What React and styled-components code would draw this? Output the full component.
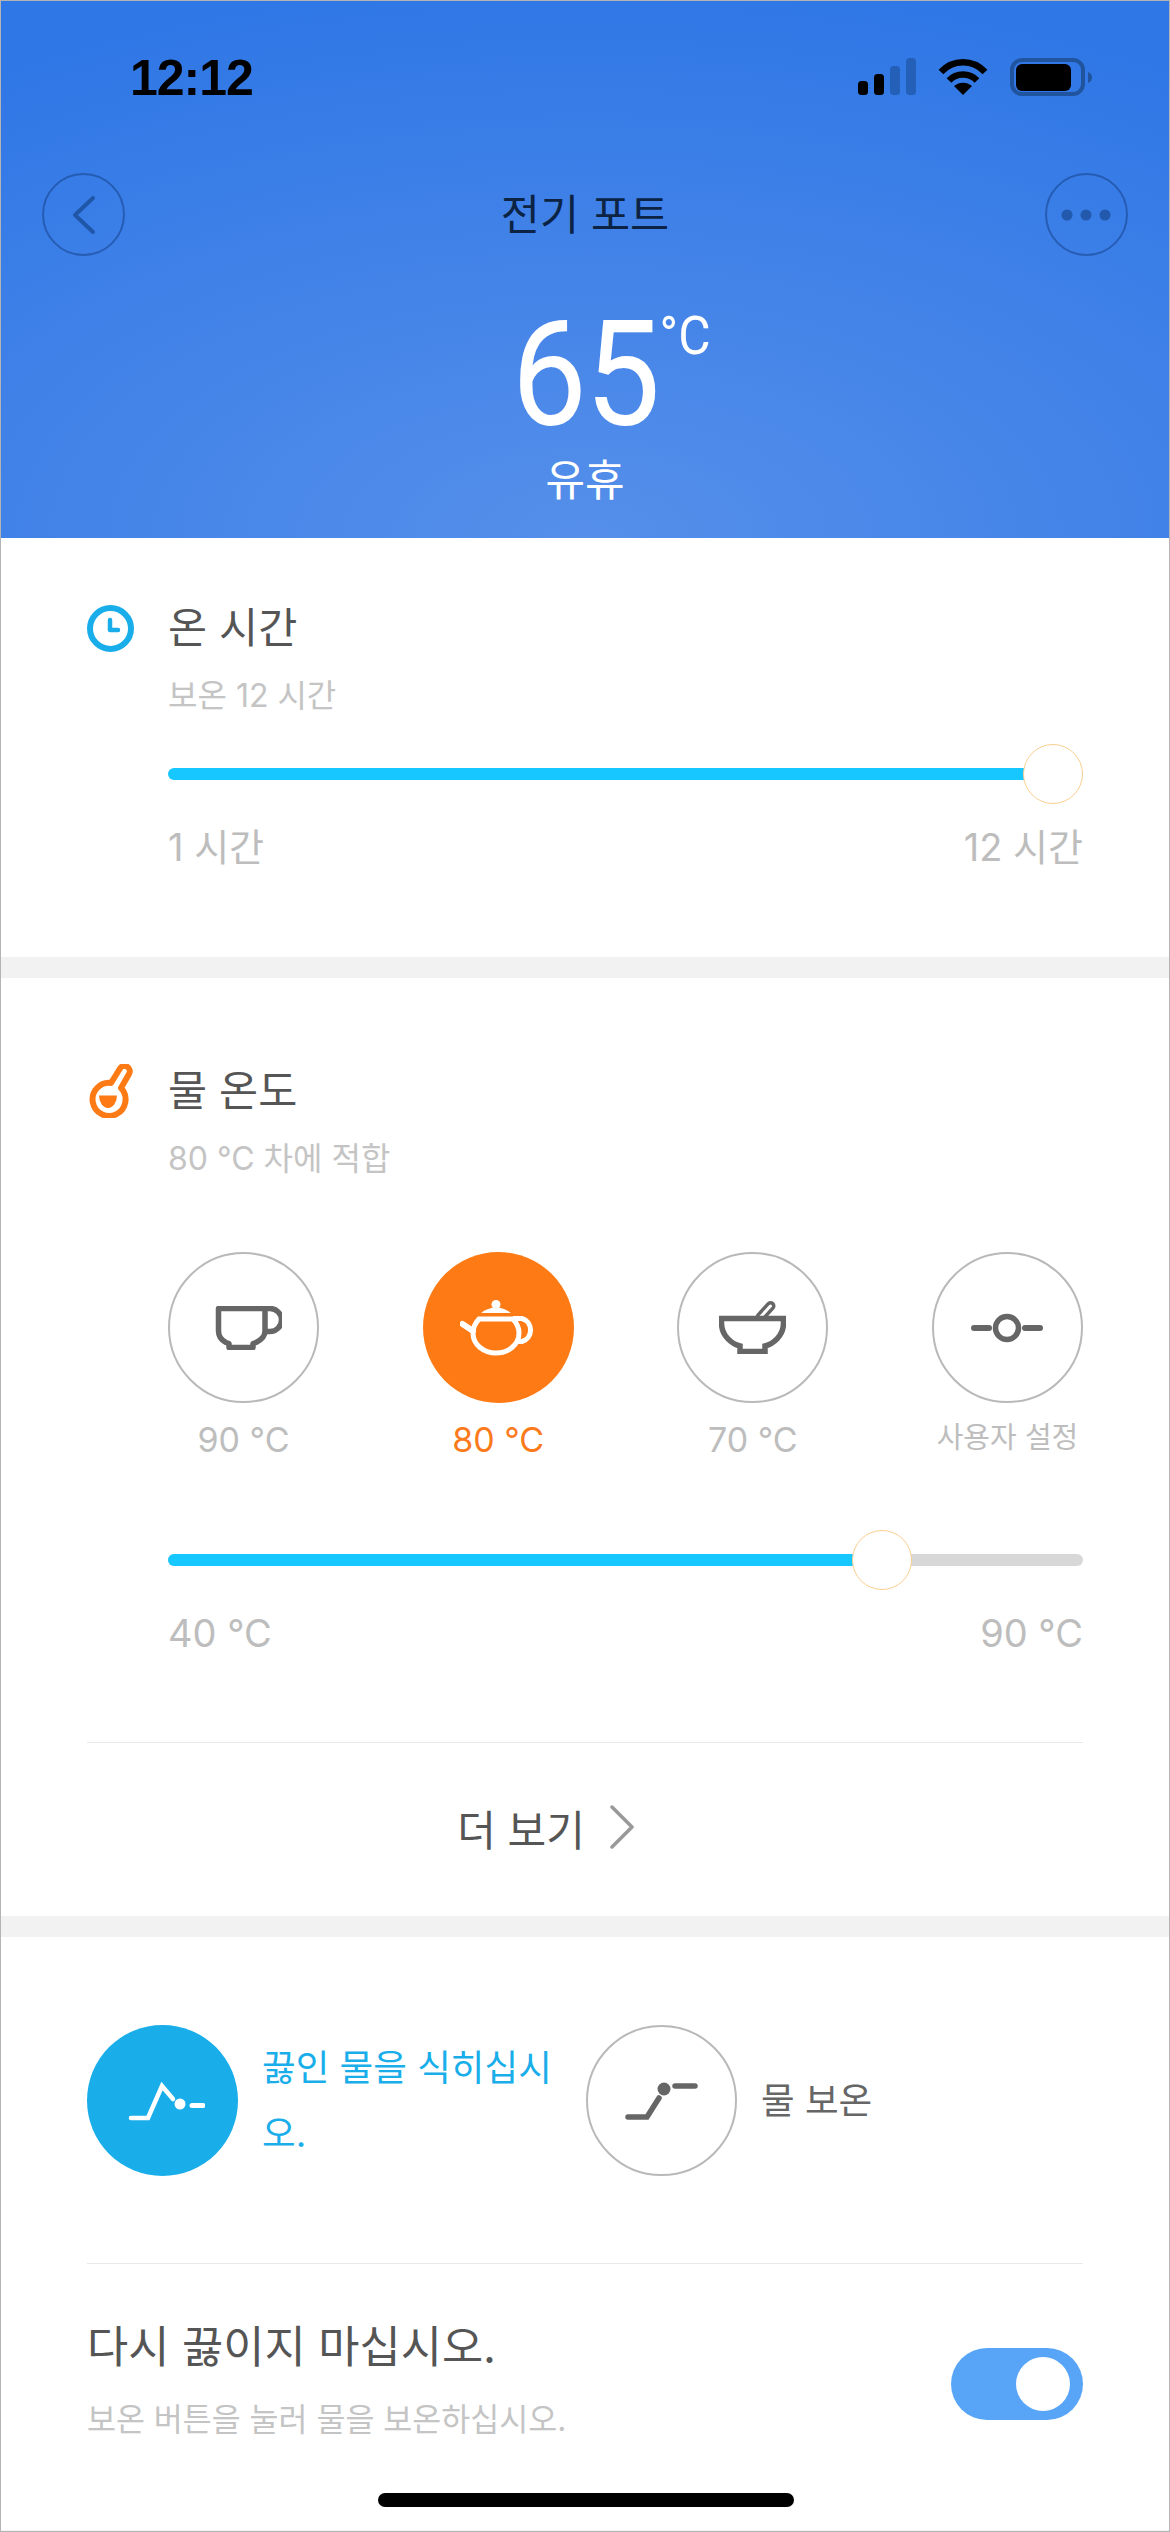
import React from "react";
import styled, { createGlobalStyle } from "styled-components";

const GlobalStyle = createGlobalStyle`
  html, body {
    margin: 0;
    padding: 0;
    background: #fff;
  }
  body {
    font-family: Inter, "Noto Sans CJK KR", sans-serif;
  }
`;

const Screen = styled.div`
  position: relative;
  box-sizing: border-box;
  width: 1170px;
  height: 2532px;
  border: 1px solid #b4b4b4;
  background: #f2f2f2;
  overflow: hidden;
`;

const Header = styled.header`
  height: 537px;
  box-sizing: border-box;
  padding: 57px 41px 0;
  display: flex;
  flex-direction: column;
  background: radial-gradient(ellipse 1100px 560px at 50% 100%, #558fea 0%, #4484e8 45%, #2f77e6 100%);
`;

const StatusBar = styled.div`
  display: flex;
  justify-content: space-between;
  align-items: flex-start;
  height: 115px;
  padding: 0 0 0 88px;
`;

const Time = styled.div`
  font-family: "Liberation Sans", sans-serif;
  font-weight: 700;
  font-size: 50px;
  line-height: 40px;
  letter-spacing: -1px;
  color: #000;
`;

const StatusIcons = styled.div`
  display: flex;
  gap: 22px;
  margin-right: 36px;
`;

const Nav = styled.div`
  display: flex;
  justify-content: space-between;
  align-items: center;
  height: 83px;
`;

const NavButton = styled.div`
  box-sizing: border-box;
  width: 83px;
  height: 83px;
  border-radius: 50%;
  border: 2px solid rgba(25, 70, 145, 0.6);
  display: flex;
  align-items: center;
  justify-content: center;
`;

const NavTitle = styled.div`
  font-size: 42.5px;
  line-height: 50px;
  color: #0c2344;
`;

const TempBlock = styled.div`
  display: flex;
  flex-direction: column;
  align-items: center;
  margin-top: 50px;
`;

const TempValue = styled.div`
  position: relative;
  font-family: Roboto, sans-serif;
  font-weight: 400;
  font-size: 146px;
  line-height: 140px;
  letter-spacing: -2px;
  color: #fff;
  transform: scaleX(0.92);
`;

const TempUnit = styled.span`
  position: absolute;
  left: 100%;
  top: 0;
  margin-left: 1px;
  font-size: 54px;
  line-height: 60px;
  letter-spacing: 0;
  font-weight: 400;
`;

const TempState = styled.div`
  font-size: 43px;
  line-height: 50px;
  color: #fff;
  margin-top: 9px;
`;

const Section = styled.section`
  background: #fff;
  box-sizing: border-box;
  padding: ${(p) => p.$pad};
  margin-top: ${(p) => (p.$first ? 0 : "21px")};
  height: ${(p) => p.$height}px;
`;

const TitleRow = styled.div`
  display: flex;
  align-items: center;
  gap: 34px;
  height: 50px;
`;

const Title = styled.div`
  font-size: 42.5px;
  line-height: 50px;
  color: #555;
`;

const SubTitle = styled.div`
  margin: 23px 0 0 81px;
  font-size: 32px;
  line-height: 40px;
  color: #c4c4c4;
`;

const Indented = styled.div`
  margin-left: 81px;
  margin-top: ${(p) => p.$top}px;
`;

const Slider = styled.div`
  position: relative;
  height: 60px;
  display: flex;
  align-items: center;
`;

const Track = styled.div`
  flex: 1;
  height: 12px;
  border-radius: 6px;
  background: #d8d8d8;
  overflow: hidden;
`;

const Fill = styled.div`
  height: 100%;
  width: ${(p) => p.$width}px;
  background: #17c7ff;
`;

const Knob = styled.div`
  position: absolute;
  top: 0;
  left: ${(p) => p.$left}px;
  box-sizing: border-box;
  width: 60px;
  height: 60px;
  border-radius: 50%;
  background: #fff;
  border: 1px solid #fbcf90;
`;

const RangeLabels = styled.div`
  display: flex;
  justify-content: space-between;
  margin-top: 21px;
  font-size: 38px;
  line-height: 44px;
  color: #bdbdbd;
`;

const Presets = styled.div`
  display: flex;
  justify-content: space-between;
  margin: 73px 0 0 81px;
`;

const Preset = styled.div`
  width: 151px;
  display: flex;
  flex-direction: column;
  align-items: center;
`;

const Round = styled.div`
  box-sizing: border-box;
  width: 151px;
  height: 151px;
  border-radius: 50%;
  display: flex;
  align-items: center;
  justify-content: center;
  flex-shrink: 0;
  border: ${(p) => (p.$fill ? "none" : "2px solid #b9b9b9")};
  background: ${(p) => p.$fill || "#fff"};
`;

const PresetLabel = styled.div`
  margin-top: 17px;
  white-space: nowrap;
  font-size: ${(p) => (p.$small ? "29px" : "34px")};
  line-height: ${(p) => (p.$small ? "36px" : "40px")};
  color: ${(p) => (p.$active ? "#fb7a1b" : "#bdbdbd")};
`;

const Divider = styled.div`
  height: 1px;
  background: #e9e9e9;
  margin-top: ${(p) => p.$top}px;
`;

const MoreRow = styled.div`
  height: 168px;
  padding-right: 78px;
  display: flex;
  align-items: center;
  justify-content: center;
  gap: 24px;
  font-size: 42px;
  color: #555;
`;

const Modes = styled.div`
  display: flex;
`;

const Mode = styled.div`
  display: flex;
  align-items: center;
  gap: 24px;
  width: ${(p) => (p.$wide ? "499px" : "auto")};
`;

const ModeLabel = styled.div`
  width: ${(p) => (p.$wide ? "300px" : "auto")};
  font-size: 36.6px;
  line-height: 66px;
  word-break: break-all;
  color: ${(p) => p.$color};
`;

const ToggleRow = styled.div`
  display: flex;
  justify-content: space-between;
  align-items: flex-start;
  margin-top: 58px;
`;

const ToggleTitle = styled.div`
  font-size: 44.8px;
  line-height: 50px;
  color: #555;
`;

const ToggleSub = styled.div`
  margin-top: 28px;
  font-size: 31.5px;
  line-height: 40px;
  color: #c4c4c4;
`;

const Toggle = styled.div`
  box-sizing: border-box;
  width: 132px;
  height: 72px;
  margin-top: 26px;
  padding: 9px 13px;
  border-radius: 36px;
  background: #58a5f8;
  display: flex;
  justify-content: flex-end;
`;

const ToggleThumb = styled.div`
  width: 54px;
  height: 54px;
  border-radius: 50%;
  background: #fff;
`;

const HomeBar = styled.div`
  position: absolute;
  left: 377px;
  bottom: 24px;
  width: 416px;
  height: 14px;
  border-radius: 7px;
  background: #000;
`;

const SignalIcon = () => (
  <svg width="58" height="37" viewBox="0 0 58 37">
    <rect x="0" y="23" width="10" height="14" rx="3.5" fill="#000" />
    <rect x="16" y="16" width="10" height="21" rx="3.5" fill="#000" />
    <rect x="32" y="8" width="10" height="29" rx="3.5" fill="#2460b8" />
    <rect x="48" y="0" width="10" height="37" rx="3.5" fill="#2460b8" />
  </svg>
);

const WifiIcon = () => (
  <svg width="50" height="37" viewBox="0 0 50 37" fill="none" stroke="#000" strokeWidth="6.5">
    <path d="M3 14C15 1 35 1 47 14" />
    <path d="M11 22.5C18.5 14.5 31.5 14.5 39 22.5" />
    <path d="M25 37L16 28C21 23.5 29 23.5 34 28Z" fill="#000" stroke="none" />
  </svg>
);

const BatteryIcon = () => (
  <svg width="82" height="38" viewBox="0 0 82 38">
    <rect x="2" y="2" width="71" height="34" rx="10" fill="none" stroke="#20549f" strokeWidth="4" />
    <rect x="6" y="6" width="55" height="27" rx="6" fill="#000" />
    <path d="M78 14C81 15 82 17 82 19.500C82 22 81 24 78 25Z" fill="#20549f" />
  </svg>
);

const ClockIcon = () => (
  <svg width="47" height="47" viewBox="0 0 47 47" fill="none" stroke="#19aeea">
    <circle cx="23.500" cy="23.500" r="20.500" strokeWidth="6" />
    <path d="M23 15V25H31" strokeWidth="4.500" strokeLinecap="round" strokeLinejoin="round" />
  </svg>
);

const FlaskIcon = () => (
  <svg width="47" height="54" viewBox="17 17 47 54">
    <path
      d="M41 36L50 21.500A5.200 5.200 0 0 1 59 27L51 41A16.500 16.500 0 1 1 41 36Z"
      fill="none"
      stroke="#fd7a15"
      strokeWidth="6"
      strokeLinejoin="round"
    />
    <path d="M29 48.500H47A9 12.500 0 0 1 29 48.500Z" fill="#fd7a15" />
  </svg>
);

const CupIcon = () => (
  <svg width="76" height="44" viewBox="-10 0 76 44" fill="none" stroke="#666" strokeWidth="5.500">
    <path d="M2.500 2.500H49V25C49 31 45 34 40 36.500L37 37.500V41.500H13V37.500L10 36.500C5 34 2.500 31 2.500 25Z" strokeLinejoin="round" />
    <path d="M47 2.500H54A11.500 11.500 0 0 1 54 25.500H47" />
  </svg>
);

const TeapotIcon = () => (
  <svg width="76" height="56" viewBox="0 0 76 56">
    <circle cx="36" cy="4.500" r="4.500" fill="#fff" />
    <path d="M21 13Q28 7.500 36 7.500Q44 7.500 51 13Z" fill="#fff" />
    <g fill="none" stroke="#fff" strokeWidth="5">
      <path d="M19 19C14.500 24 13 28 13 33C13 45 24 53 36 53C48 53 59 45 59 33C59 28 57.500 24 53 19Z" />
      <path d="M53 18.500H62A12 12 0 0 1 62 41.500H56" />
    </g>
    <path d="M2.500 24L13 31" stroke="#fff" strokeWidth="6" strokeLinecap="round" />
  </svg>
);

const BowlIcon = () => (
  <svg width="67" height="53" viewBox="0 0 67 53" fill="none" stroke="#666" strokeWidth="5.500">
    <path d="M41.500 16L51.500 5" strokeWidth="10" strokeLinecap="round" />
    <path d="M41.500 16L51.500 5" stroke="#fff" strokeWidth="3" strokeLinecap="round" />
    <path d="M2.500 17.500H64.500V22C64.500 35 54 43 46 45V50.500H21V45C13 43 2.500 35 2.500 22Z" fill="#fff" />
  </svg>
);

const CustomIcon = () => (
  <svg width="72" height="30" viewBox="0 0 72 30" fill="none" stroke="#666" strokeWidth="6">
    <path d="M3 15H18" strokeLinecap="round" />
    <circle cx="36" cy="15" r="11.500" strokeWidth="5.500" />
    <path d="M54 15H69" strokeLinecap="round" />
  </svg>
);

const CoolIcon = () => (
  <svg width="84" height="80" viewBox="0 0 84 80" fill="none" stroke="#fff">
    <path d="M10 57H27L41 25L52 38" strokeWidth="4.500" strokeLinecap="round" />
    <circle cx="59" cy="43" r="5.500" fill="#fff" stroke="none" />
    <path d="M71 44.500H82" strokeWidth="5" strokeLinecap="round" />
  </svg>
);

const KeepWarmIcon = () => (
  <svg width="81" height="82" viewBox="0 0 81 82" fill="none" stroke="#666">
    <path d="M7 57H26L38 38" strokeWidth="5.500" strokeLinecap="round" />
    <circle cx="43" cy="29" r="6.500" fill="#666" stroke="none" />
    <path d="M54 26H74" strokeWidth="5.500" strokeLinecap="round" />
  </svg>
);

const presets = [
  { label: "90 °C", icon: <CupIcon /> },
  { label: "80 °C", icon: <TeapotIcon />, active: true },
  { label: "70 °C", icon: <BowlIcon /> },
  { label: "사용자 설정", icon: <CustomIcon />, small: true },
];

export default function App() {
  return (
    <Screen>
      <GlobalStyle />
      <Header>
        <StatusBar>
          <Time>12:12</Time>
          <StatusIcons>
            <SignalIcon />
            <WifiIcon />
            <BatteryIcon />
          </StatusIcons>
        </StatusBar>
        <Nav>
          <NavButton>
            <svg width="26" height="40" viewBox="0 0 26 40" fill="none">
              <path d="M22 3L4 20L22 37" stroke="#1f56a8" strokeWidth="4" strokeLinecap="round" strokeLinejoin="round" />
            </svg>
          </NavButton>
          <NavTitle>전기 포트</NavTitle>
          <NavButton>
            <svg width="50" height="12" viewBox="0 0 50 12" fill="#2259ad">
              <circle cx="6" cy="6" r="5.500" />
              <circle cx="25" cy="6" r="5.500" />
              <circle cx="44" cy="6" r="5.500" />
            </svg>
          </NavButton>
        </Nav>
        <TempBlock>
          <TempValue>
            65<TempUnit>°C</TempUnit>
          </TempValue>
          <TempState>유휴</TempState>
        </TempBlock>
      </Header>

      <Section $first $height={419} $pad="65px 86px 0">
        <TitleRow>
          <ClockIcon />
          <Title>온 시간</Title>
        </TitleRow>
        <SubTitle>보온 12 시간</SubTitle>
        <Indented $top={28}>
          <Slider>
            <Track>
              <Fill $width={915} />
            </Track>
            <Knob $left={855} />
          </Slider>
          <RangeLabels>
            <span>1 시간</span>
            <span>12 시간</span>
          </RangeLabels>
        </Indented>
      </Section>

      <Section $height={938} $pad="88px 86px 0">
        <TitleRow>
          <FlaskIcon />
          <Title>물 온도</Title>
        </TitleRow>
        <SubTitle>80 °C 차에 적합</SubTitle>
        <Presets>
          {presets.map((p) => (
            <Preset key={p.label}>
              <Round $fill={p.active ? "#fd7a15" : undefined}>{p.icon}</Round>
              <PresetLabel $active={p.active} $small={p.small}>
                {p.label}
              </PresetLabel>
            </Preset>
          ))}
        </Presets>
        <Indented $top={70}>
          <Slider>
            <Track>
              <Fill $width={700} />
            </Track>
            <Knob $left={684} />
          </Slider>
          <RangeLabels>
            <span>40 °C</span>
            <span>90 °C</span>
          </RangeLabels>
        </Indented>
        <Divider $top={87} />
        <MoreRow>
          <span>더 보기</span>
          <svg width="26" height="44" viewBox="0 0 26 44" fill="none">
            <path d="M3 2L23 22L3 42" stroke="#999" strokeWidth="3.500" strokeLinecap="round" strokeLinejoin="round" />
          </svg>
        </MoreRow>
      </Section>

      <Section $height={593} $pad="88px 86px 0">
        <Modes>
          <Mode $wide>
            <Round $fill="#19aeea">
              <CoolIcon />
            </Round>
            <ModeLabel $wide $color="#19aeea">
              끓인 물을 식히십시오.
            </ModeLabel>
          </Mode>
          <Mode>
            <Round>
              <KeepWarmIcon />
            </Round>
            <ModeLabel $color="#666">물 보온</ModeLabel>
          </Mode>
        </Modes>
        <Divider $top={87} />
        <ToggleRow>
          <div>
            <ToggleTitle>다시 끓이지 마십시오.</ToggleTitle>
            <ToggleSub>보온 버튼을 눌러 물을 보온하십시오.</ToggleSub>
          </div>
          <Toggle>
            <ToggleThumb />
          </Toggle>
        </ToggleRow>
      </Section>
      <HomeBar />
    </Screen>
  );
}
